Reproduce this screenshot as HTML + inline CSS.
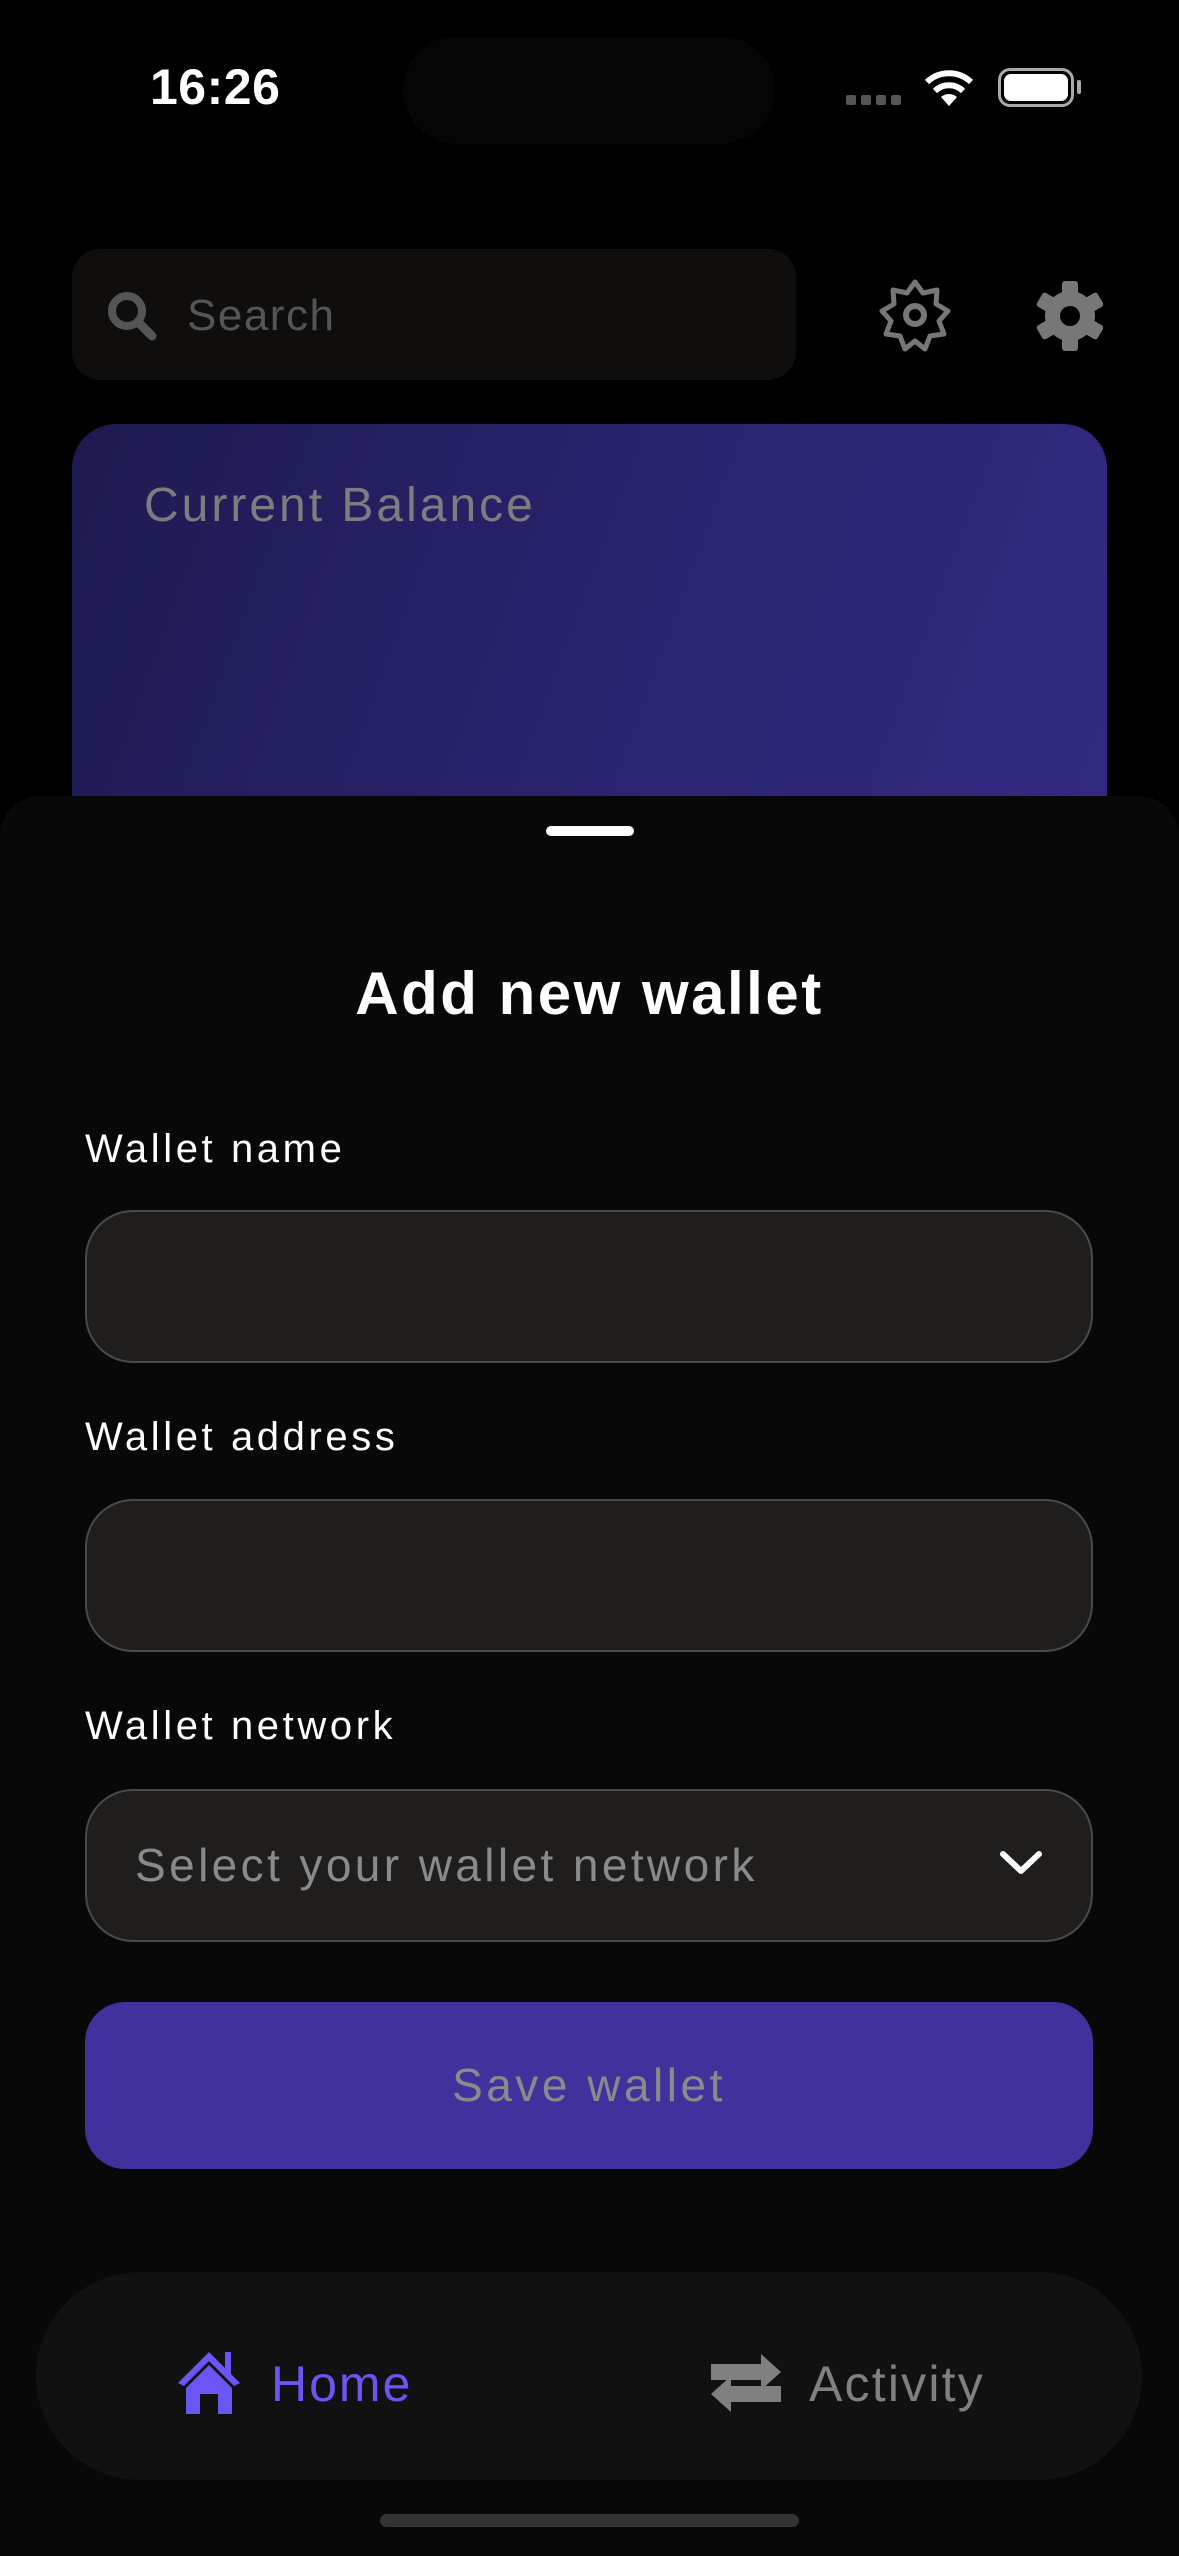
<!DOCTYPE html>
<html><head><meta charset="utf-8"><style>
*{margin:0;padding:0;box-sizing:border-box}
body{width:1179px;height:2556px;background:#000;font-family:"Liberation Sans",sans-serif;position:relative;overflow:hidden;color:#fff}
.abs{position:absolute}
.input{position:absolute;left:85px;width:1008px;height:153px;border:2px solid #4a4a4a;border-radius:48px;background:#1f1e1d}
.label{position:absolute;left:85px;font-size:40px;color:#fff;letter-spacing:3.6px}
</style></head><body>
<div class="abs" style="left:150px;top:58px;font-size:50px;font-weight:bold;letter-spacing:0.5px">16:26</div>
<div class="abs" style="left:403px;top:36px;width:372px;height:108px;border-radius:54px;background:#050505"></div>
<div class="abs" style="left:846px;top:95px;display:flex;gap:5px">
<div style="width:10px;height:10px;border-radius:2px;background:#555"></div><div style="width:10px;height:10px;border-radius:2px;background:#555"></div><div style="width:10px;height:10px;border-radius:2px;background:#555"></div><div style="width:10px;height:10px;border-radius:2px;background:#555"></div></div>
<svg class="abs" style="left:922px;top:66px" width="54" height="42" viewBox="0 0 54 42"><path d="M27 40 L19 31 A12 12 0 0 1 35 31 Z" fill="#fff"/><path d="M13 25 A20 20 0 0 1 41 25" stroke="#fff" stroke-width="6" fill="none"/><path d="M5 16 A32 32 0 0 1 49 16" stroke="#fff" stroke-width="6" fill="none"/></svg>
<div class="abs" style="left:998px;top:68px;width:76px;height:39px;border:3px solid #aaa;border-radius:12px"></div>
<div class="abs" style="left:1004px;top:74px;width:64px;height:27px;background:#fff;border-radius:7px"></div>
<div class="abs" style="left:1077px;top:80px;width:4px;height:14px;background:#aaa;border-radius:2px"></div>

<div class="abs" style="left:72px;top:249px;width:724px;height:131px;border-radius:28px;background:#0f0e0d"></div>
<svg class="abs" style="left:106px;top:290px" width="52" height="52" viewBox="0 0 52 52"><circle cx="21" cy="21" r="15" stroke="#555" stroke-width="8" fill="none"/><path d="M32 32 L46 46" stroke="#555" stroke-width="9" stroke-linecap="round"/></svg>
<div class="abs" style="left:187px;top:291px;font-size:44px;color:#555;letter-spacing:1.5px">Search</div>
<svg class="abs" style="left:878px;top:278px" width="74" height="74" viewBox="-37 -37 74 74"><path d="M0,-33 L8,-22 L22,-25 L21,-11 L33,-4 L24,6 L29,19 L15,21 L10,34 L0,26 L-10,34 L-15,21 L-29,19 L-24,6 L-33,-4 L-21,-11 L-22,-25 L-8,-22 Z" stroke="#777" stroke-width="5" fill="none" stroke-linejoin="round"/><circle r="9" stroke="#777" stroke-width="6" fill="none"/></svg>
<svg class="abs" style="left:1034px;top:280px" width="72" height="72" viewBox="-36 -36 72 72"><g fill="#777"><circle r="25"/><rect x="-8" y="-35" width="16" height="70" rx="3"/><rect x="-8" y="-35" width="16" height="70" rx="3" transform="rotate(60)"/><rect x="-8" y="-35" width="16" height="70" rx="3" transform="rotate(120)"/></g><circle r="10" fill="#000"/></svg>

<div class="abs" style="left:72px;top:424px;width:1035px;height:420px;border-radius:44px 44px 0 0;background:linear-gradient(110deg,#1e1a50,#2a2470 55%,#322a82)"></div>
<div class="abs" style="left:144px;top:478px;font-size:48px;color:#7d7d80;letter-spacing:3px">Current Balance</div>

<div class="abs" style="left:0;top:796px;width:1179px;height:1760px;border-radius:40px 40px 0 0;background:#080808"></div>
<div class="abs" style="left:546px;top:826px;width:88px;height:10px;border-radius:5px;background:#fff"></div>
<div class="abs" style="left:0;width:1179px;top:959px;text-align:center;font-size:60px;font-weight:bold;letter-spacing:2.5px">Add new wallet</div>

<div class="label" style="top:1127px">Wallet name</div>
<div class="input" style="top:1210px"></div>
<div class="label" style="top:1415px">Wallet address</div>
<div class="input" style="top:1499px"></div>
<div class="label" style="top:1704px">Wallet network</div>
<div class="input" style="top:1789px"></div>
<div class="abs" style="left:135px;top:1838px;font-size:46px;color:#8a8a8a;letter-spacing:3.4px">Select your wallet network</div>
<svg class="abs" style="left:998px;top:1848px" width="46" height="30" viewBox="0 0 46 30"><path d="M5 6 L23 23 L41 6" stroke="#fff" stroke-width="6" fill="none" stroke-linecap="round" stroke-linejoin="round"/></svg>

<div class="abs" style="left:85px;top:2002px;width:1008px;height:167px;border-radius:40px;background:#3f329d"></div>
<div class="abs" style="left:85px;width:1008px;top:2058px;text-align:center;font-size:46px;color:#8a8a8a;letter-spacing:3.5px">Save wallet</div>

<div class="abs" style="left:36px;top:2272px;width:1106px;height:208px;border-radius:104px;background:#111"></div>
<svg class="abs" style="left:176px;top:2348px" width="66" height="66" viewBox="0 0 66 66"><path d="M33 4 L2 35 L8 38 L33 13 L58 38 L64 35 L55 26 L55 4 L49 4 L49 20 Z" fill="#6a55f5"/><path d="M10 40 L33 17 L56 40 L56 66 L42 66 L42 46 L24 46 L24 66 L10 66 Z" fill="#6a55f5"/></svg>
<div class="abs" style="left:271px;top:2355px;font-size:50px;color:#6a55f5;letter-spacing:2px">Home</div>
<svg class="abs" style="left:709px;top:2352px" width="74" height="62" viewBox="0 0 74 62"><path d="M2 12 L52 12 L52 2 L72 20 L52 38 L52 28 L2 28 Z" fill="#808080"/><path d="M72 34 L22 34 L22 24 L2 42 L22 60 L22 50 L72 50 Z" fill="#808080"/></svg>
<div class="abs" style="left:809px;top:2355px;font-size:50px;color:#808080;letter-spacing:2.2px">Activity</div>
<div class="abs" style="left:380px;top:2514px;width:419px;height:13px;border-radius:7px;background:#333"></div>
</body></html>
